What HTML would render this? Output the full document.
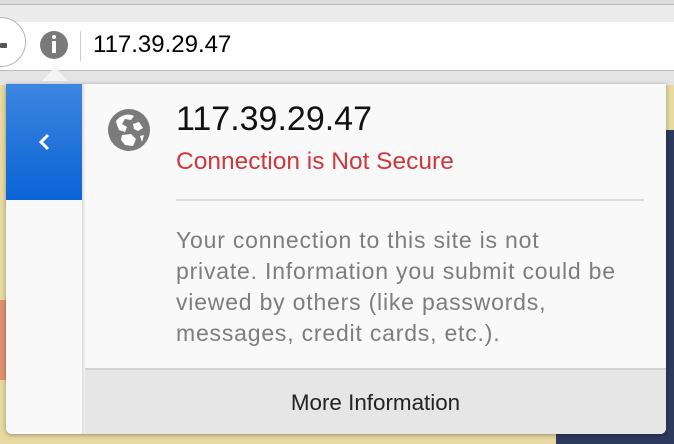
<!DOCTYPE html>
<html><head><style>
body{margin:0;width:674px;height:444px;overflow:hidden;position:relative;font-family:"Liberation Sans",sans-serif;background:#e9e9e9}
.abs{position:absolute}
</style></head><body>
<div class="abs" style="left:0;top:0;width:674px;height:4px;background:#dcdcdc"></div>
<div class="abs" style="left:0;top:4px;width:674px;height:1px;background:#b8b8b8"></div>
<div class="abs" style="left:0;top:5px;width:674px;height:17px;background:#ececec"></div>
<div class="abs" style="left:0;top:22px;width:674px;height:48px;background:#fff;border-bottom:1px solid #bdbdbd"></div>
<div class="abs" style="left:0;top:71px;width:674px;height:14px;background:#e4e4e4"></div>
<div class="abs" style="left:0;top:85px;width:674px;height:359px;background:#e8d9a0"></div>
<div class="abs" style="left:556px;top:130px;width:118px;height:314px;background:#2d3a5e"></div>
<div class="abs" style="left:0;top:300px;width:8px;height:80px;background:#e0906e"></div>
<div class="abs" style="left:-24px;top:17px;width:48px;height:48px;border-radius:50%;background:#fff;border:1px solid #b4b4b4"></div>
<div class="abs" style="left:0;top:43px;width:7px;height:5px;background:#555;border-radius:1px"></div>
<div class="abs" style="left:40px;top:31px;width:28px;height:28px;border-radius:50%;background:#7a7a7a"></div>
<div class="abs" style="left:52px;top:35px;width:4px;height:4px;border-radius:50%;background:#fff"></div>
<div class="abs" style="left:52px;top:41px;width:4px;height:12px;background:#fff"></div>
<div class="abs" style="left:80px;top:31px;width:1px;height:30px;background:#ccc"></div>
<div class="abs" style="left:93px;top:31px;font-size:24px;color:#000">117.39.29.47</div>
<div class="abs" style="left:6px;top:84px;width:660px;height:350px;background:#f9f9f9;border-radius:0 0 6px 6px;box-shadow:0 1px 5px rgba(0,0,0,.35);overflow:hidden">
  <div class="abs" style="left:0;top:0;width:76px;height:116px;background:linear-gradient(#3d86e0,#0a63d6)"></div>
  <svg class="abs" style="left:30px;top:48px" width="16" height="20"><path d="M12 3 L5 10 L12 17" stroke="#fff" stroke-width="3" fill="none"/></svg>
  <div class="abs" style="left:76px;top:0;width:3px;height:350px;background:linear-gradient(90deg,#ddd,#f0f0f0)"></div>
  <div class="abs" style="left:79px;top:0;width:581px;height:350px;background:#f9f9f9"></div>
  <svg class="abs" style="left:101px;top:24px" width="44" height="44" viewBox="0 0 44 44"><circle cx="22" cy="22" r="21" fill="#7b7b7b"/><path d="M9 13 C13 7 22 5 27 8 L24 12 L18 11 L15 16 L20 19 L18 24 L12 22 L10 17 Z M26 16 L32 14 L36 20 L31 23 L27 21 Z M15 27 L24 26 L29 31 L26 38 L18 37 L14 32 Z M33 28 L37 27 L35 34 Z" fill="#fff"/></svg>
  <div class="abs" style="left:170px;top:16px;font-size:34px;color:#111">117.39.29.47</div>
  <div class="abs" style="left:170px;top:64px;font-size:24.5px;color:#d1363b">Connection is Not Secure</div>
  <div class="abs" style="left:170px;top:115px;width:468px;height:2px;background:#dcdcdc"></div>
  <div class="abs" style="left:170px;top:141px;width:480px;font-size:23px;line-height:31px;color:#7d7d7d;letter-spacing:0.8px;white-space:nowrap">Your connection to this site is not<br>private. Information you submit could be<br>viewed by others (like passwords,<br>messages, credit cards, etc.).</div>
  <div class="abs" style="left:79px;top:284px;width:581px;height:66px;background:#e6e6e6;border-top:2px solid #d2d2d2;text-align:center;line-height:66px;font-size:22.4px;color:#222">More Information</div>
</div>
<div class="abs" style="left:42px;top:67px;width:0;height:0;border-left:13px solid transparent;border-right:13px solid transparent;border-bottom:14px solid #f4f4f4"></div>
</body></html>
